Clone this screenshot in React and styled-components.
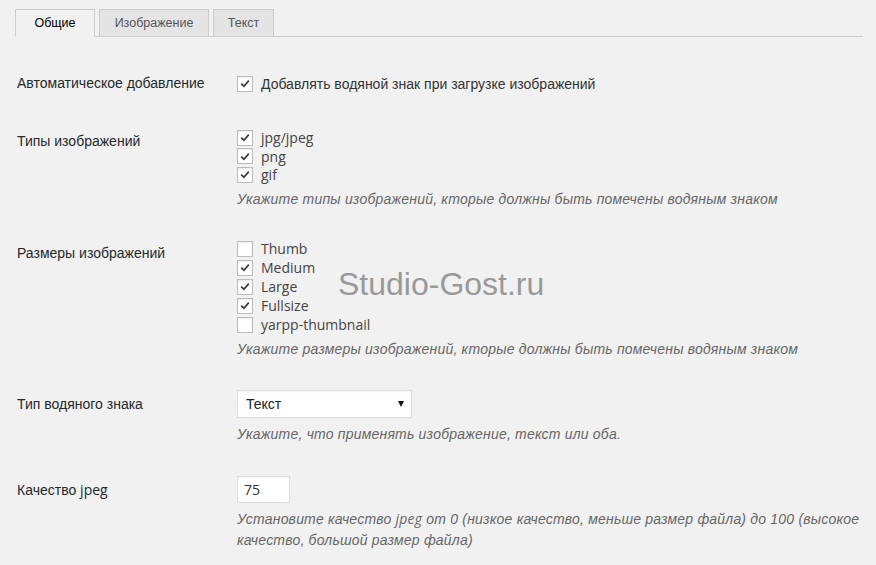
import React from "react";
import styled, { createGlobalStyle } from "styled-components";

const Global = createGlobalStyle`
  html, body { margin: 0; padding: 0; background: #f1f1f1; }
  body { font-family: "Liberation Sans", Arial, sans-serif; color: #222; }
`;

const Page = styled.div`
  width: 876px;
  height: 565px;
  overflow: hidden;
  background: #f1f1f1;
  padding: 9px 14px 0 15px;
  box-sizing: border-box;
  position: relative;
`;

const TabBar = styled.div`
  display: flex;
  gap: 4px;
  border-bottom: 1px solid #ccc;
  width: 848px;
  height: 27px;
  box-sizing: content-box;
`;

const Tab = styled.div`
  width: ${(p) => p.$w}px;
  box-sizing: border-box;
  display: flex;
  align-items: center;
  justify-content: center;
  font-size: 12.5px;
  color: ${(p) => (p.$active ? "#000" : "#555")};
  background: ${(p) => (p.$active ? "#f1f1f1" : "#e4e4e4")};
  border: 1px solid #ccc;
  border-bottom: ${(p) => (p.$active ? "1px solid #f1f1f1" : "none")};
  height: ${(p) => (p.$active ? 28 : 27)}px;
  margin-bottom: ${(p) => (p.$active ? -1 : 0)}px;
`;

const Form = styled.div`
  display: flex;
  flex-direction: column;
  padding-top: 37px;
`;

const Row = styled.div`
  display: grid;
  grid-template-columns: 220px 1fr;
  padding-left: 2px;
  margin-bottom: ${(p) => p.$mb}px;
`;

const Label = styled.div`
  font-size: 14px;
  line-height: 19px;
  color: #23282d;
  padding-top: ${(p) => p.$pt || 0}px;
`;

const Latin = styled.span`
  font-family: "Open Sans", sans-serif;
`;

const Control = styled.div`
  display: flex;
  flex-direction: column;
  align-items: flex-start;
`;

const CheckLine = styled.label`
  display: flex;
  align-items: center;
  height: ${(p) => p.$h || 19}px;
  font-size: 14px;
  color: ${(p) => (p.$latin ? "#444" : "#333")};
  font-family: ${(p) => (p.$latin ? '"Open Sans", sans-serif' : '"Liberation Sans", Arial, sans-serif')};
`;

const Box = styled.span`
  width: 14px;
  height: 14px;
  border: 1px solid #bbb;
  background: #fff;
  box-shadow: inset 0 1px 2px rgba(0, 0, 0, 0.07);
  margin-right: 8px;
  display: inline-flex;
  align-items: center;
  justify-content: center;
  flex: none;
`;

const Desc = styled.div`
  margin-top: ${(p) => p.$mt || 5}px;
  font-size: 14px;
  line-height: 21px;
  font-style: italic;
  color: #666;
  letter-spacing: 0.2px;
  white-space: nowrap;
`;

const SelectBox = styled.div`
  width: 175px;
  height: 28px;
  box-sizing: border-box;
  border: 1px solid #ddd;
  background: #fff;
  display: flex;
  align-items: center;
  justify-content: space-between;
  padding: 0 7px 0 8px;
  font-size: 14px;
  color: #222;
  box-shadow: inset 0 1px 2px rgba(0, 0, 0, 0.04);
`;

const Arrow = styled.span`
  width: 0;
  height: 0;
  border-left: 3px solid transparent;
  border-right: 3px solid transparent;
  border-top: 6px solid #111;
`;

const NumInput = styled.div`
  width: 53px;
  height: 27px;
  box-sizing: border-box;
  border: 1px solid #ddd;
  background: #fff;
  display: flex;
  align-items: center;
  padding-left: 6px;
  font-family: "Open Sans", sans-serif;
  font-size: 14px;
  color: #333;
  box-shadow: inset 0 1px 2px rgba(0, 0, 0, 0.04);
`;

const Watermark = styled.div`
  position: absolute;
  left: 338px;
  top: 266px;
  font-family: "Liberation Sans", Arial, sans-serif;
  font-size: 32px;
  line-height: 36px;
  color: #999;
  pointer-events: none;
`;

const Check = () => (
  <svg width="10" height="9" viewBox="0 0 10 9">
    <path d="M1.2 4.6 L3.9 7.2 L8.8 1.6" fill="none" stroke="#3a3a3a" strokeWidth="1.7" />
  </svg>
);

const Item = ({ checked, latin, h, children }) => (
  <CheckLine $latin={latin} $h={h}>
    <Box>{checked && <Check />}</Box>
    {children}
  </CheckLine>
);

export default function App() {
  return (
    <Page>
      <Global />
      <TabBar>
        <Tab $active $w={80}>Общие</Tab>
        <Tab $w={110}>Изображение</Tab>
        <Tab $w={61}>Текст</Tab>
      </TabBar>
      <Form>
        <Row $mb={35}>
          <Label>Автоматическое добавление</Label>
          <Control>
            <Item checked>Добавлять водяной знак при загрузке изображений</Item>
          </Control>
        </Row>
        <Row $mb={29}>
          <Label $pt={4}>Типы изображений</Label>
          <Control>
            <Item checked latin h={19}>jpg/jpeg</Item>
            <Item checked latin h={18}>png</Item>
            <Item checked latin h={19}>gif</Item>
            <Desc>Укажите типы изображений, кторые должны быть помечены водяным знаком</Desc>
          </Control>
        </Row>
        <Row $mb={30}>
          <Label $pt={5}>Размеры изображений</Label>
          <Control>
            <Item latin>Thumb</Item>
            <Item checked latin>Medium</Item>
            <Item checked latin>Large</Item>
            <Item checked latin>Fullsize</Item>
            <Item latin>yarpp-thumbnail</Item>
            <Desc>Укажите размеры изображений, кторые должны быть помечены водяным знаком</Desc>
          </Control>
        </Row>
        <Row $mb={31}>
          <Label $pt={5}>Тип водяного знака</Label>
          <Control>
            <SelectBox>
              Текст
              <Arrow />
            </SelectBox>
            <Desc $mt={6}>Укажите, что применять изображение, текст или оба.</Desc>
          </Control>
        </Row>
        <Row $mb={0}>
          <Label $pt={4}>
            Качество <Latin>jpeg</Latin>
          </Label>
          <Control>
            <NumInput>75</NumInput>
            <Desc $mt={5}>
              Установите качество <Latin>jpeg</Latin> от 0 (низкое качество, меньше размер файла) до 100 (высокое
              <br />
              качество, большой размер файла)
            </Desc>
          </Control>
        </Row>
      </Form>
      <Watermark>Studio-Gost.ru</Watermark>
    </Page>
  );
}
